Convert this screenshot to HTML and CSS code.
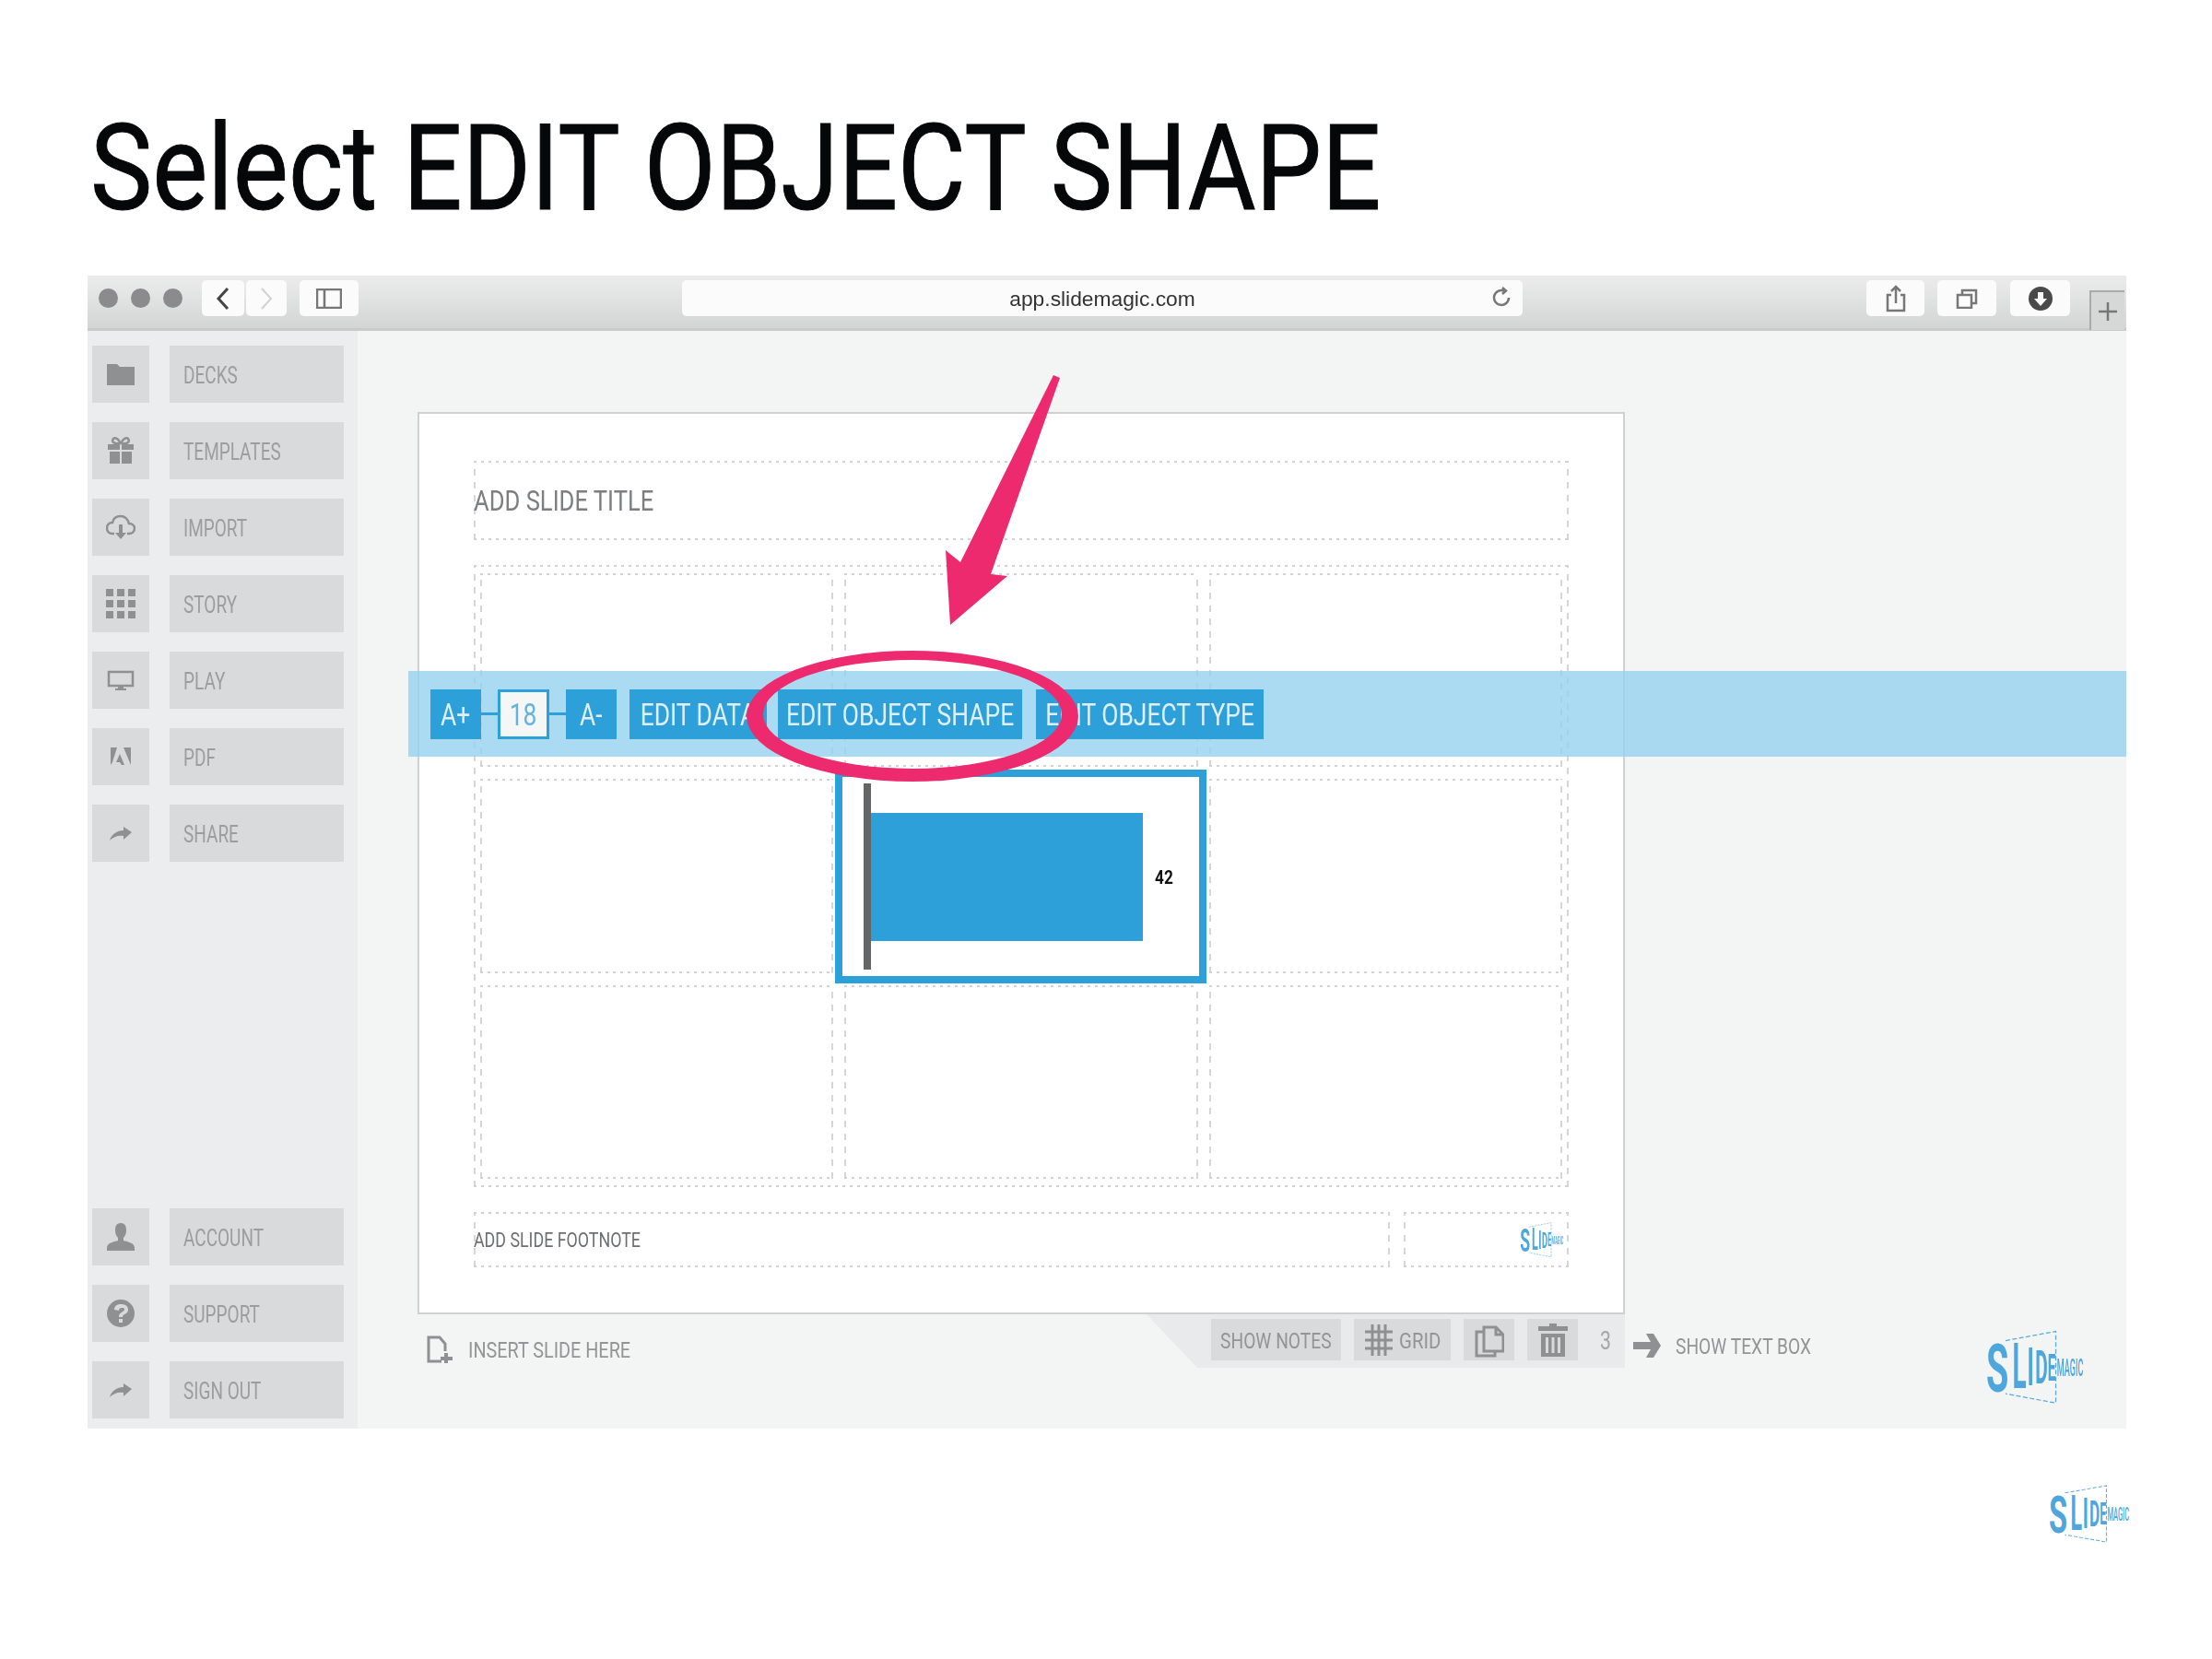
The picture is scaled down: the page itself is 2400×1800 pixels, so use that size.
FILE: index.html
```html
<!DOCTYPE html>
<html lang="en">
<head>
<meta charset="utf-8">
<title>Select EDIT OBJECT SHAPE</title>
<link rel="stylesheet" href="styles.css">
</head>
<body>
<header class="heading"><h1 class="heading-text">Select EDIT OBJECT SHAPE</h1></header>

<div class="window">
  <div class="toolbar">
    <div class="dots"><i class="dot"></i><i class="dot"></i><i class="dot"></i></div>
    <div class="tb-btn tb-back"><svg width="16" height="26" viewBox="0 0 16 26"><path class="ln-dark" d="M13 2 3 13l10 11"/></svg></div>
    <div class="tb-btn tb-forward"><svg width="16" height="26" viewBox="0 0 16 26"><path class="ln-faint" d="M3 2l10 11L3 24"/></svg></div>
    <div class="tb-btn tb-side"><svg width="28" height="22" viewBox="0 0 28 22"><path class="ln-mid" d="M1 1h26v20H1zM9 1v20"/></svg></div>
    <div class="url"><span class="url-text">app.slidemagic.com</span>
      <svg class="reload" width="22" height="24" viewBox="0 0 22 24"><path class="ln-mid" d="M18 12a8 8 0 1 1-5-7.500M11 1l4 3.500-4 3.500"/></svg>
    </div>
    <div class="tb-btn tb-share"><svg width="22" height="30" viewBox="0 0 22 30"><path class="ln-mid" d="M6 11H2v17h18V11h-4M11 20V2M6 7l5-5 5 5"/></svg></div>
    <div class="tb-btn tb-tabs"><svg width="24" height="22" viewBox="0 0 24 22"><path class="ln-mid" d="M2 7h15v14H2zM7 7V2h15v14h-5"/></svg></div>
    <div class="tb-btn tb-dl"><svg width="26" height="26" viewBox="0 0 26 26"><circle class="fill-dark" cx="13" cy="13" r="13"/><path class="fill-white" d="M10 6h6v7h4l-7 8-7-8h4z"/></svg></div>
    <div class="tab-plus"><svg width="22" height="22" viewBox="0 0 22 22"><path class="ln-mid" d="M11 1v20M1 11h20"/></svg></div>
  </div>

  <div class="workspace">
    <aside class="sidebar">
      <div class="nav-group">
        <div class="nav-row"><div class="nav-icon"><svg width="32" height="26" viewBox="0 0 32 26"><path class="ic" d="M1 2h11l3 3h16v20H1z"/></svg></div><div class="nav-label"><span class="cond">DECKS</span></div></div>
        <div class="nav-row"><div class="nav-icon"><svg width="32" height="32" viewBox="0 0 32 32"><path class="ic" d="M2 9h13v6H2zM17 9h13v6H17zM4 17h11v13H4zM17 17h11v13H17z"/><path class="ic-ln" d="M15 8c-7 1-9-2-7-5 2-2 7 1 7 5zM17 8c7 1 9-2 7-5-2-2-7 1-7 5z"/></svg></div><div class="nav-label"><span class="cond">TEMPLATES</span></div></div>
        <div class="nav-row"><div class="nav-icon"><svg width="32" height="28" viewBox="0 0 32 28"><path class="ic-ln" d="M9 21H7C3 21 1 18 1 15s2-6 6-6c1-5 5-7 9-7s8 3 9 8c3 0 6 2 6 5 0 4-3 6-6 6h-2"/><path class="ic" d="M14 11h4v9h4l-6 7-6-7h4z"/></svg></div><div class="nav-label"><span class="cond">IMPORT</span></div></div>
        <div class="nav-row"><div class="nav-icon"><svg width="32" height="32" viewBox="0 0 32 32"><path class="ic" d="M0 0h8v8H0zM12 0h8v8h-8zM24 0h8v8h-8zM0 12h8v8H0zM12 12h8v8h-8zM24 12h8v8h-8zM0 24h8v8H0zM12 24h8v8h-8zM24 24h8v8h-8z"/></svg></div><div class="nav-label"><span class="cond">STORY</span></div></div>
        <div class="nav-row"><div class="nav-icon"><svg width="30" height="22" viewBox="0 0 30 22"><path class="ic-ln" d="M2 2h26v15H2z"/><path class="ic" d="M12 17h6v3h3v2H9v-2h3z"/></svg></div><div class="nav-label"><span class="cond">PLAY</span></div></div>
        <div class="nav-row"><div class="nav-icon"><svg width="22" height="20" viewBox="0 0 22 20"><path class="ic" d="M0 0h7L2 16 0 19zM14 0h8v19zM10 7l5 12h-3l-2-3H6z"/></svg></div><div class="nav-label"><span class="cond">PDF</span></div></div>
        <div class="nav-row"><div class="nav-icon"><svg width="24" height="15" viewBox="0 0 24 15"><path class="ic" d="M15 0l9 6-9 8v-4C9 9 4 11 0 15 2 8 8 4 15 4z"/></svg></div><div class="nav-label"><span class="cond">SHARE</span></div></div>
      </div>
      <div class="nav-group">
        <div class="nav-row"><div class="nav-icon"><svg width="32" height="30" viewBox="0 0 32 30"><path class="ic" d="M16 0c5 0 6 4 6 8 0 3-1 6-3 8v3c3 1 12 2 12 8v3H1v-3c0-6 9-7 12-8v-3c-2-2-3-5-3-8 0-4 1-8 6-8z"/></svg></div><div class="nav-label"><span class="cond">ACCOUNT</span></div></div>
        <div class="nav-row"><div class="nav-icon"><svg width="30" height="30" viewBox="0 0 30 30"><path class="ic" fill-rule="evenodd" d="M15 0a15 15 0 1 0 0 30 15 15 0 0 0 0-30zM8 11c0-4 3-6 7-6 5 0 8 2 8 6 0 3-2 4-4 5-1 1-2 1-2 3h-4c0-3 1-4 3-5 1-1 3-2 3-3 0-2-1-2-3-2s-3 1-3 3zm5 10h4v4h-4z"/></svg></div><div class="nav-label"><span class="cond">SUPPORT</span></div></div>
        <div class="nav-row"><div class="nav-icon"><svg width="24" height="15" viewBox="0 0 24 15"><path class="ic" d="M15 0l9 6-9 8v-4C9 9 4 11 0 15 2 8 8 4 15 4z"/></svg></div><div class="nav-label"><span class="cond">SIGN OUT</span></div></div>
      </div>
    </aside>

    <main class="stage">
      <section class="slide">
        <div class="slide-title dashed"><span class="cond cond-title">ADD SLIDE TITLE</span></div>
        <div class="slide-grid dashed">
          <div class="cell dashed"></div><div class="cell dashed"></div><div class="cell dashed"></div>
          <div class="cell dashed"></div><div class="cell dashed"></div><div class="cell dashed"></div>
          <div class="cell dashed"></div><div class="cell dashed"></div><div class="cell dashed"></div>
        </div>
        <div class="slide-foot">
          <div class="foot-note dashed"><span class="cond cond-foot">ADD SLIDE FOOTNOTE</span></div>
          <div class="foot-logo dashed">
            <svg class="logo logo-small" viewBox="20 5 92 75" preserveAspectRatio="none"><path class="logo-frame" d="M41 19 85 11V73L41 65"/><g class="logo-text"><text transform="translate(24 63) scale(.56 1)" font-size="57">S</text><text transform="translate(47 60) scale(.42 1)" font-size="54">L</text><text transform="translate(60 58) scale(.44 1)" font-size="46">I</text><text transform="translate(67 56) scale(.42 1)" font-size="40">D</text><text transform="translate(78 54) scale(.38 1)" font-size="33">E</text><text class="logo-thin" transform="translate(86 50) scale(.35 1)" font-size="21">MAGIC</text></g></svg>
          </div>
        </div>
      </section>
      <div class="below">
        <div class="insert">
          <svg width="28" height="30" viewBox="0 0 28 30"><path class="ln-grey" d="M16 28H2V2h12l6 7v8"/><path class="ic" d="M19 19h4v4h5v4h-5v3h-4v-3h-4v-4h4z"/></svg>
          <span class="cond cond-insert">INSERT SLIDE HERE</span>
        </div>
        <div class="tools">
          <div class="tool tool-notes"><span class="cond cond-tool">SHOW NOTES</span></div>
          <div class="tool tool-grid">
            <svg width="32" height="36" viewBox="0 0 32 36"><path class="ln-grey" d="M9 1v34M16 1v34M23 1v34M1 9h30M1 18h30M1 27h30"/></svg>
            <span class="cond cond-grid">GRID</span>
          </div>
          <div class="tool tool-copy"><svg width="32" height="38" viewBox="0 0 32 38"><path class="ln-grey" d="M10 5h13l8 8v18H10zM23 5v8h8M10 10H2v26h20v-5"/></svg></div>
          <div class="tool tool-trash"><svg width="32" height="36" viewBox="0 0 32 36"><path class="ic" d="M12 0h8v3h12v5H0V3h12zM3 11h26v25H3zM8 15v17h3V15zM14.500 15v17h3V15zM21 15v17h3V15z" fill-rule="evenodd"/></svg></div>
          <span class="cond page-num">3</span>
        </div>
        <div class="show-text">
          <svg width="30" height="26" viewBox="0 0 30 26"><path class="ic" d="M14 0h8l8 13-8 13h-8l5-9H0V9h19z"/></svg>
          <span class="cond cond-show">SHOW TEXT BOX</span>
        </div>
        <svg class="logo logo-app" viewBox="20 5 92 75" preserveAspectRatio="none"><path class="logo-frame" d="M41 19 85 11V73L41 65"/><g class="logo-text"><text transform="translate(24 63) scale(.56 1)" font-size="57">S</text><text transform="translate(47 60) scale(.42 1)" font-size="54">L</text><text transform="translate(60 58) scale(.44 1)" font-size="46">I</text><text transform="translate(67 56) scale(.42 1)" font-size="40">D</text><text transform="translate(78 54) scale(.38 1)" font-size="33">E</text><text class="logo-thin" transform="translate(86 50) scale(.35 1)" font-size="21">MAGIC</text></g></svg>
      </div>
    </main>
  </div>

  <div class="band">
    <div class="bb bb-size"><span class="cond cond-btn">A+</span></div>
    <i class="link"></i>
    <div class="bb bb-value"><span class="cond cond-btn">18</span></div>
    <i class="link"></i>
    <div class="bb bb-size"><span class="cond cond-btn">A-</span></div>
    <div class="bb bb-data"><span class="cond cond-btn">EDIT DATA</span></div>
    <div class="bb bb-shape"><span class="cond cond-btn">EDIT OBJECT SHAPE</span></div>
    <div class="bb bb-type"><span class="cond cond-btn">EDIT OBJECT TYPE</span></div>
  </div>

  <div class="selected">
    <i class="axis"></i>
    <i class="bar"></i>
    <span class="cond bar-value">42</span>
  </div>
</div>

<footer class="page-foot">
  <svg class="logo logo-page" viewBox="20 5 92 75" preserveAspectRatio="none"><path class="logo-frame" d="M41 19 85 11V73L41 65"/><g class="logo-text"><text transform="translate(24 63) scale(.56 1)" font-size="57">S</text><text transform="translate(47 60) scale(.42 1)" font-size="54">L</text><text transform="translate(60 58) scale(.44 1)" font-size="46">I</text><text transform="translate(67 56) scale(.42 1)" font-size="40">D</text><text transform="translate(78 54) scale(.38 1)" font-size="33">E</text><text class="logo-thin" transform="translate(86 50) scale(.35 1)" font-size="21">MAGIC</text></g></svg>
</footer>

<svg class="annotate" width="2400" height="1800" viewBox="0 0 2400 1800" aria-hidden="true">
  <path class="pink" d="M1143 407 1150 410 1075 623 1093 625 1031 678 1026 597 1042 610z"/>
  <path class="pink" fill-rule="evenodd" d="M810 777a180 71 0 1 0 360 0a180 71 0 1 0-360 0zM828 775a162 59 0 1 1 324 0a162 59 0 1 1-324 0z"/>
</svg>
</body>
</html>
```

FILE: styles.css
```css
* { box-sizing: border-box; }
html, body { margin: 0; padding: 0; }
body {
  position: relative;
  width: 2400px;
  height: 1800px;
  overflow: hidden;
  background: #fff;
  font-family: Roboto, "Liberation Sans", sans-serif;
}
i { display: block; }

/* condensed type */
.cond {
  display: inline-block;
  white-space: nowrap;
  transform: scaleX(.76);
  transform-origin: left center;
  font-size: 25px;
  line-height: 1;
}

.heading { height: 299px; padding: 108px 0 0 98px; }
.heading-text {
  margin: 0;
  font-size: 129px;
  line-height: 150px;
  font-weight: 400;
  color: #050708;
  white-space: nowrap;
  -webkit-text-stroke: 1px #050708;
  transform: scaleX(.878);
  transform-origin: left center;
}

/* window */
.window {
  position: relative;
  width: 2212px;
  height: 1251px;
  margin-left: 95px;
  background: #f3f4f4;
  filter: blur(.7px);
}
.toolbar {
  display: flex;
  align-items: flex-start;
  height: 60px;
  padding: 5px 0 0 12px;
  background: linear-gradient(#ececec, #d3d5d5);
  border-bottom: 3px solid #c9caca;
}
.dots { display: flex; gap: 14px; margin-top: 9px; margin-right: 21px; }
.dot { width: 21px; height: 21px; border-radius: 50%; background: #8b8b8d; }
.tb-btn {
  display: flex;
  align-items: center;
  justify-content: center;
  height: 39px;
  background: #fbfbfb;
  border-radius: 5px;
}
.tb-back { width: 46px; margin-right: 2px; }
.tb-forward { width: 44px; margin-right: 14px; }
.tb-side { width: 64px; }
.url {
  display: flex;
  align-items: center;
  justify-content: center;
  position: relative;
  width: 912px;
  height: 39px;
  margin-left: 351px;
  background: #fbfbfb;
  border-radius: 5px;
}
.url-text { font-family: "Liberation Sans", sans-serif; font-size: 22.800px; color: #333; margin-top: 2px; }
.reload { position: absolute; right: 11px; top: 7px; }
.tb-share { width: 63px; margin-left: 373px; }
.tb-tabs { width: 64px; margin-left: 14px; }
.tb-dl { width: 65px; margin-left: 15px; }
.tab-plus {
  display: flex;
  align-items: center;
  justify-content: center;
  width: 38px;
  height: 43px;
  margin: 11px 0 0 21px;
  background: #d6d7d7;
  border: 2px solid #a9aaaa;
  border-right: 0;
  border-bottom: 0;
}
.ln-dark, .ln-faint, .ln-mid, .ln-grey, .ic-ln { fill: none; stroke-width: 2.500; }
.ln-dark { stroke: #444; stroke-width: 3; }
.ln-faint { stroke: #d2d2d2; stroke-width: 2; }
.ln-mid { stroke: #777; }
.ln-grey { stroke: #8e9091; stroke-width: 3; }
.fill-dark { fill: #4a4a4a; }
.fill-white { fill: #fbfbfb; }
.ic { fill: #8e9091; }
.ic-ln { stroke: #8e9091; }

/* sidebar */
.workspace { display: flex; height: 1191px; }
.sidebar {
  display: flex;
  flex-direction: column;
  justify-content: space-between;
  width: 293px;
  padding: 16px 15px 11px 5px;
  background: #ebedee;
}
.nav-group { display: flex; flex-direction: column; gap: 21px; }
.nav-row { display: flex; gap: 22px; height: 62px; }
.nav-icon {
  display: flex;
  align-items: center;
  justify-content: center;
  width: 62px;
  background: #d8dadb;
}
.nav-label {
  display: flex;
  align-items: center;
  flex: 1;
  padding: 2px 0 0 15px;
  background: #d8dadb;
  color: #9b9d9e;
}

/* dotted placeholder outline: fine dots across, longer dashes down */
.dashed {
  border: 2px solid transparent;
  background-image:
    repeating-linear-gradient(90deg, #d2d2d2 0 3px, transparent 3px 8px),
    repeating-linear-gradient(90deg, #d2d2d2 0 3px, transparent 3px 8px),
    repeating-linear-gradient(0deg, #d6d6d6 0 7px, transparent 7px 14px),
    repeating-linear-gradient(0deg, #d6d6d6 0 7px, transparent 7px 14px);
  background-size: 100% 2px, 100% 2px, 2px 100%, 2px 100%;
  background-position: top, bottom, left, right;
  background-repeat: no-repeat;
  background-origin: border-box;
  background-clip: border-box;
}

/* stage */
.stage { display: flex; flex-direction: column; flex: 1; padding: 88px 0 0 65px; }
.slide {
  width: 1310px;
  height: 979px;
  padding: 51px 59px 0;
  background: #fff;
  border: 2px solid #cfd0d0;
}
.slide-title {
  display: flex;
  align-items: center;
  height: 86px;
  margin-bottom: 27px;
  color: #7c7e80;
}
.cond-title { font-size: 32px; transform: scaleX(.8); margin-left: -2px; }
.slide-grid {
  display: grid;
  grid-template-columns: repeat(3, 1fr);
  grid-template-rows: repeat(3, 1fr);
  gap: 13px 12px;
  height: 675px;
  padding: 7px 5px;
}
.slide-foot { display: flex; gap: 15px; height: 60px; margin-top: 27px; }
.foot-note {
  display: flex;
  align-items: center;
  flex: 1;
  color: #6c6e70;
}
.cond-foot { font-size: 22px; transform: scaleX(.81); margin: 2px 0 0 -2px; }
.foot-logo {
  display: flex;
  align-items: center;
  justify-content: flex-end;
  width: 179px;
  padding-right: 2px;
}

/* below the slide */
.below { display: flex; align-items: flex-start; }
.insert { display: flex; gap: 17px; width: 791px; padding: 23px 0 0 10px; color: #929495; }
.cond-insert { font-size: 24px; align-self: center; transform: scaleX(.825); margin-top: 2px; }
.tools {
  display: flex;
  align-items: center;
  gap: 14px;
  width: 519px;
  height: 58px;
  padding: 5px 0 8px 70px;
  background: #e8eaeb;
  clip-path: polygon(0 0, 100% 0, 100% 100%, 55px 100%);
}
.tool {
  display: flex;
  align-items: center;
  justify-content: center;
  height: 45px;
  background: #d8dadb;
  color: #929495;
}
.tool-notes { width: 141px; padding-top: 2px; }
.tool-grid { width: 105px; gap: 6px; padding-left: 11px; justify-content: flex-start; }
.tool-copy, .tool-trash { width: 55px; }
.cond-tool { font-size: 24px; transform: scaleX(.8); transform-origin: center; }
.cond-grid { font-size: 24px; transform: scaleX(.85); margin-top: 2px; }
.page-num { font-size: 28px; color: #a4a6a7; margin: 3px 0 0 10px; }
.show-text { display: flex; gap: 16px; padding: 21px 0 0 9px; color: #929495; }
.cond-show { font-size: 24px; align-self: center; transform: scaleX(.8); margin-top: 1px; }
.logo { display: block; }
.logo-app { width: 114px; height: 94px; margin: 11px 0 0 148px; }
.logo-small { width: 51px; height: 45px; }
.logo-page { width: 94px; height: 74px; }
.page-foot { display: flex; justify-content: flex-end; padding: 56px 87px 0 0; }
.logo-frame { fill: none; stroke: #5aa9de; stroke-width: 1; stroke-dasharray: 4 2; }
.logo-text { fill: #4fa6dd; font-family: Roboto, sans-serif; font-weight: 700; }
.logo-thin { font-weight: 500; }

/* band over the slide */
.band {
  position: absolute;
  left: 348px;
  top: 429px;
  right: 0;
  height: 93px;
  display: flex;
  align-items: center;
  padding-left: 24px;
  background: rgba(150, 210, 240, .8);
}
.bb {
  display: flex;
  align-items: center;
  justify-content: center;
  height: 54px;
  padding-top: 2px;
  background: #2da0da;
  color: #dff0fa;
}
.cond-btn { font-size: 33px; transform: scaleX(.8); transform-origin: center; }
.bb-size { width: 55px; }
.bb-value { width: 56px; background: #f5f6f6; border: 3px solid #2da0da; color: #62b4e0; }
.link { width: 18px; height: 3px; background: #2da0da; }
.bb-data { width: 149px; margin-left: 14px; }
.bb-shape { width: 265px; margin-left: 12px; }
.bb-type { width: 247px; margin-left: 15px; }

/* selected chart */
.selected {
  position: absolute;
  left: 811px;
  top: 536px;
  width: 403px;
  height: 232px;
  display: flex;
  align-items: center;
  padding: 7px 0 7px 23px;
  background: #fff;
  border: 8px solid #2da0da;
}
.axis { align-self: stretch; width: 8px; background: #636567; }
.bar { width: 295px; height: 139px; background: #2da0da; }
.bar-value { margin: 2px 0 0 13px; font-size: 21px; font-weight: 700; color: #111; transform: scaleX(.82); }

/* annotation */
.annotate { position: absolute; left: 0; top: 0; pointer-events: none; filter: blur(.5px); }
.pink { fill: #ee2a6e; }
```
